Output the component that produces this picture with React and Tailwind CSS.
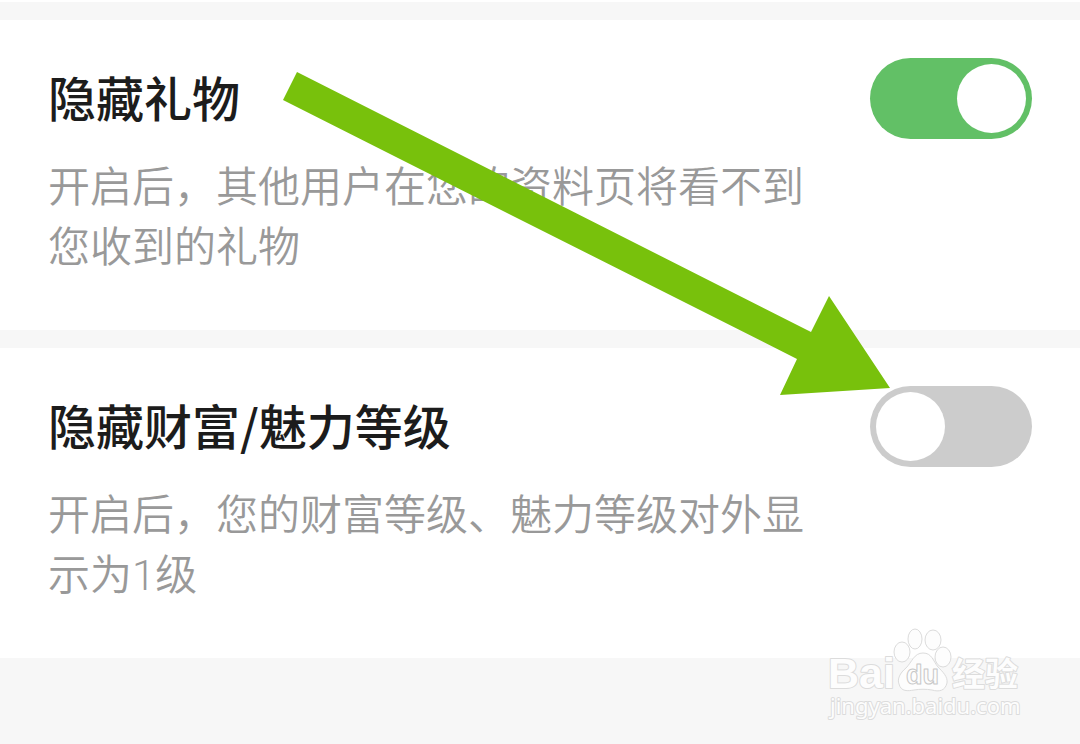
import { useState } from 'react';

const settings = [
  {
    id: 'hide-gifts',
    title: '隐藏礼物',
    description: '开启后，其他用户在您的资料页将看不到您收到的礼物',
    enabled: true,
  },
  {
    id: 'hide-level',
    title: '隐藏财富/魅力等级',
    description: '开启后，您的财富等级、魅力等级对外显示为1级',
    enabled: false,
  },
];

const SettingRow = ({ id, title, description, enabled }) => {
  const [checked, setChecked] = useState(enabled);

  return (
    <section className="flex items-start gap-12 bg-white px-12 pt-[38px] pb-[52px]">
      <div className="flex-1">
        <label htmlFor={id} className="block text-5xl leading-[76px] font-medium text-[#1c1c1c]">
          {title}
        </label>
        <p
          id={`${id}-hint`}
          className="mt-6 font-['Roboto','Noto_Sans_CJK_SC',sans-serif] text-[42px] leading-[60px] font-[350] text-[#999999]"
        >
          {description}
        </p>
      </div>

      <input
        id={id}
        type="checkbox"
        role="switch"
        aria-describedby={`${id}-hint`}
        checked={checked}
        onChange={(e) => setChecked(e.target.checked)}
        className="flex h-[81px] w-[162px] shrink-0 cursor-pointer appearance-none items-center rounded-full bg-[#cccccc] px-[6px] before:size-[69px] before:rounded-full before:bg-white checked:justify-end checked:bg-[#62c066]"
      />
    </section>
  );
};

const Arrow = () => (
  <svg
    className="pointer-events-none absolute top-[72px] left-[282px]"
    width="608"
    height="324"
    viewBox="0 0 608 324"
    aria-hidden="true"
  >
    <path d="M15 0 529 260 547 224 608 316 498 323 515 287 1 28Z" fill="#78c10c" />
  </svg>
);

const Watermark = () => (
  <svg
    className="pointer-events-none absolute right-[54px] bottom-5"
    width="200"
    height="98"
    viewBox="0 0 200 98"
    fill="#fdfdfd"
    stroke="#dcdcdc"
    strokeWidth="2"
    strokeLinejoin="round"
    role="img"
    aria-label="Baidu 经验"
  >
    <g strokeWidth="1">
      <ellipse cx="76" cy="26" rx="8" ry="10" />
      <ellipse cx="89" cy="13" rx="7" ry="10" />
      <ellipse cx="107" cy="14" rx="8" ry="10" />
      <ellipse cx="117" cy="31" rx="8" ry="10" />
      <path d="M97 27C88 27 86 36 80 42C74 47 71 53 73 58C75 66 82 65 88 64C94 63 100 63 106 64C113 66 119 65 121 57C122 51 117 46 112 41C107 35 106 27 97 27Z" />
    </g>
    <text
      x="80"
      y="58"
      strokeWidth="1"
      stroke="#c8c8c8"
      className="font-['Liberation_Sans',sans-serif] text-[27px] font-bold"
    >
      du
    </text>
    <g style={{ paintOrder: 'stroke' }}>
      <text x="2" y="62" className="font-['Liberation_Sans',sans-serif] text-[43px] font-bold">
        Bai
      </text>
      <text x="126" y="60" className="font-['Noto_Sans_CJK_SC',sans-serif] text-[33px] font-bold">
        经验
      </text>
      <text x="4" y="88" className="font-['Noto_Sans',sans-serif] text-[22px]">
        jingyan.baidu.com
      </text>
    </g>
  </svg>
);

const App = () => {
  return (
    <main className="relative min-h-screen bg-[#f7f7f7] font-['Noto_Sans_CJK_SC',sans-serif]" lang="zh-CN">
      <div className="h-[2px] bg-white" />
      <div className="flex flex-col gap-[18px] pt-[18px]">
        {settings.map((item) => (
          <SettingRow key={item.id} {...item} />
        ))}
      </div>

      <Arrow />
      <Watermark />
    </main>
  );
};

export default App;
